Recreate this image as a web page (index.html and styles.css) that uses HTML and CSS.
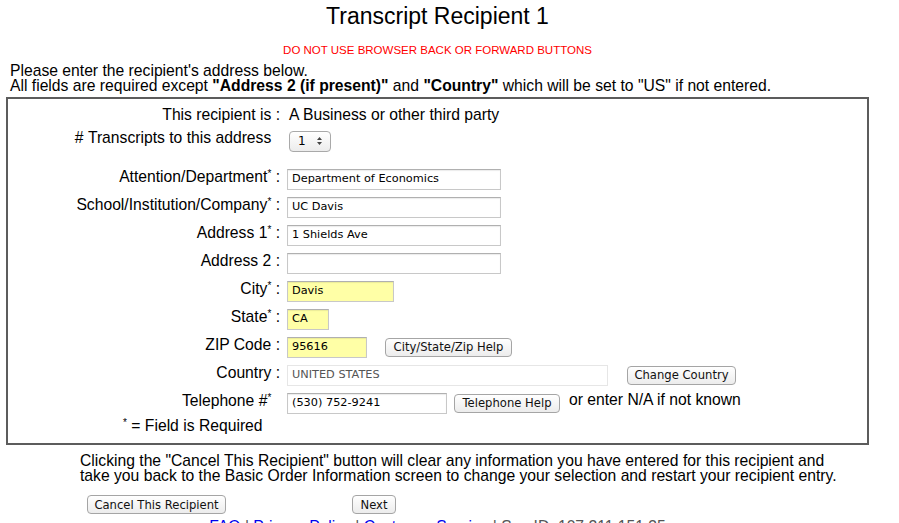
FILE: index.html
```html
<!DOCTYPE html>
<html>
<head>
<meta charset="utf-8">
<title>Transcript Recipient 1</title>
<link rel="stylesheet" href="styles.css">
</head>
<body>
<div class="page">
  <h1 class="title">Transcript Recipient 1</h1>
  <p class="warn">DO NOT USE BROWSER BACK OR FORWARD BUTTONS</p>
  <p class="intro">Please enter the recipient's address below.<br>All fields are required except <b>"Address 2 (if present)"</b> and <b>"Country"</b> which will be set to "US" if not entered.</p>

  <div class="box">
    <div class="row row-first">
      <span class="lbl">This recipient is :</span>
      <span class="val">A Business or other third party</span>
    </div>
    <div class="row row-sel">
      <span class="lbl">#&nbsp;Transcripts to this address&nbsp;&nbsp;</span>
      <span class="val"><span class="select">1<svg width="7" height="10" viewBox="0 0 7 10"><path d="M3.5 1 L6 4 H1 Z M3.5 9 L6 6 H1 Z" fill="#444"/></svg></span></span>
    </div>
    <div class="row row-gap">
      <span class="lbl">Attention/Department<sup>*</sup> :</span>
      <span class="val"><span class="inp w-long">Department of Economics</span></span>
    </div>
    <div class="row">
      <span class="lbl">School/Institution/Company<sup>*</sup> :</span>
      <span class="val"><span class="inp w-long">UC Davis</span></span>
    </div>
    <div class="row">
      <span class="lbl">Address 1<sup>*</sup> :</span>
      <span class="val"><span class="inp w-long">1 Shields Ave</span></span>
    </div>
    <div class="row">
      <span class="lbl">Address 2 :</span>
      <span class="val"><span class="inp w-long"></span></span>
    </div>
    <div class="row">
      <span class="lbl">City<sup>*</sup> :</span>
      <span class="val"><span class="inp yellow w-city">Davis</span></span>
    </div>
    <div class="row">
      <span class="lbl">State<sup>*</sup> :</span>
      <span class="val"><span class="inp yellow w-state">CA</span></span>
    </div>
    <div class="row">
      <span class="lbl">ZIP Code :</span>
      <span class="val"><span class="inp yellow w-zip">95616</span><span class="btn btn-zip">City/State/Zip Help</span></span>
    </div>
    <div class="row">
      <span class="lbl">Country :</span>
      <span class="val"><span class="inp ro w-country">UNITED STATES</span><span class="btn btn-country">Change Country</span></span>
    </div>
    <div class="row">
      <span class="lbl">Telephone #<sup>*</sup>&nbsp;&nbsp;</span>
      <span class="val"><span class="inp w-phone">(530) 752-9241</span><span class="btn btn-phone">Telephone Help</span><span class="note">or enter N/A if not known</span></span>
    </div>
    <div class="row row-req">
      <span class="lbl"><sup>*</sup> = Field is Required&nbsp;&nbsp;&nbsp;&nbsp;</span>
      <span class="val"></span>
    </div>
  </div>

  <p class="cancel-note">Clicking the "Cancel This Recipient" button will clear any information you have entered for this recipient and<br>take you back to the Basic Order Information screen to change your selection and restart your recipient entry.</p>

  <div class="actions">
    <span class="btn btn-cancel">Cancel This Recipient</span>
    <span class="btn btn-next">Next</span>
  </div>

  <p class="footer"><a href="#">FAQ</a> | <a href="#">Privacy Policy</a> | <a href="#">Customer Service</a> | ServID: 107.211.151.35</p>
</div>
</body>
</html>
```

FILE: styles.css
```css
html, body {
  margin: 0;
  padding: 0;
  background: #fff;
}
body {
  font-family: "Liberation Sans", Arial, Helvetica, sans-serif;
  color: #000;
  font-size: 15.7px;
  overflow: hidden;
}
.page {
  width: 863px;
  margin-left: 6px;
}
.title {
  margin: 2px 0 0 0;
  font-size: 23px;
  font-weight: normal;
  line-height: 28px;
  text-align: center;
}
.warn {
  margin: 13px 0 0 0;
  color: #ff0000;
  font-size: 11.5px;
  line-height: 14px;
  text-align: center;
}
.intro {
  margin: 6px 0 0 4px;
  font-size: 15.7px;
  line-height: 15px;
}
.box {
  margin-top: 4px;
  border: 2px solid #5c5c5c;
  padding: 5px 0 8px 0;
}
.row {
  display: grid;
  grid-template-columns: 272px 1fr;
  column-gap: 7px;
  align-items: center;
  height: 28px;
}
.row-first { height: 22px; }
.row-gap { margin-top: 11px; }
.row-req { height: 18px; }
.lbl {
  text-align: right;
  font-size: 15.7px;
  line-height: 18px;
  white-space: nowrap;
  margin-bottom: 5px;
}
.row-first .lbl,
.row-req .lbl { margin-bottom: 0; }
.lbl sup {
  font-size: 10px;
  vertical-align: 5px;
  line-height: 0;
}
.val {
  display: flex;
  align-items: center;
  font-size: 15.7px;
  line-height: 18px;
  white-space: nowrap;
}
.row-first .val { padding-left: 2px; }
.select {
  display: inline-flex;
  align-items: center;
  justify-content: space-between;
  box-sizing: border-box;
  margin-left: 2px;
  width: 42px;
  height: 21px;
  padding: 0 7px 0 8px;
  border: 1px solid #a9a9a9;
  border-radius: 4px;
  background: linear-gradient(#ffffff, #ececec);
  font-family: "DejaVu Sans", sans-serif;
  font-size: 12px;
  margin-top: 2px;
}
.inp {
  display: inline-flex;
  align-items: center;
  box-sizing: border-box;
  height: 21px;
  padding: 0 4px;
  border: 1px solid #c8c8c8;
  border-top-color: #b0b0b0;
  box-shadow: inset 0 1px 1px rgba(0,0,0,0.08);
  background: #fff;
  font-family: "DejaVu Sans", sans-serif;
  font-size: 11.3px;
  color: #000;
}
.yellow { background: #ffffa6; }
.ro {
  border-color: #e6e6e6;
  box-shadow: none;
  color: #555;
}
.w-long { width: 214px; }
.w-city { width: 107px; }
.w-state { width: 42px; }
.w-zip { width: 80px; }
.w-country { width: 321px; }
.w-phone { width: 160px; }
.btn {
  display: inline-flex;
  align-items: center;
  justify-content: center;
  box-sizing: border-box;
  height: 19px;
  padding: 0 6px;
  border: 1px solid #a5a5a5;
  border-radius: 4px;
  background: linear-gradient(#ffffff, #ececec);
  font-family: "DejaVu Sans", sans-serif;
  font-size: 11.6px;
  color: #111;
  white-space: nowrap;
}
.btn-zip { margin-left: 18px; width: 127px; }
.btn-country { margin-left: 19px; width: 109px; }
.btn-phone { margin-left: 7px; width: 106px; }
.note {
  margin-left: 9px;
  margin-bottom: 7px;
  font-size: 15.7px;
}
.cancel-note {
  margin: 8px 0 0 74px;
  font-size: 15.7px;
  line-height: 15px;
}
.actions {
  display: flex;
  align-items: center;
  margin-top: 12px;
  padding-left: 81px;
}
.btn-cancel { width: 139px; }
.btn-next { width: 44px; margin-left: 126px; }
.footer {
  margin: 4px 0 0 0;
  text-align: center;
  font-size: 15.7px;
  color: #555;
}
.footer a {
  color: #0000ee;
  text-decoration: none;
}
```
